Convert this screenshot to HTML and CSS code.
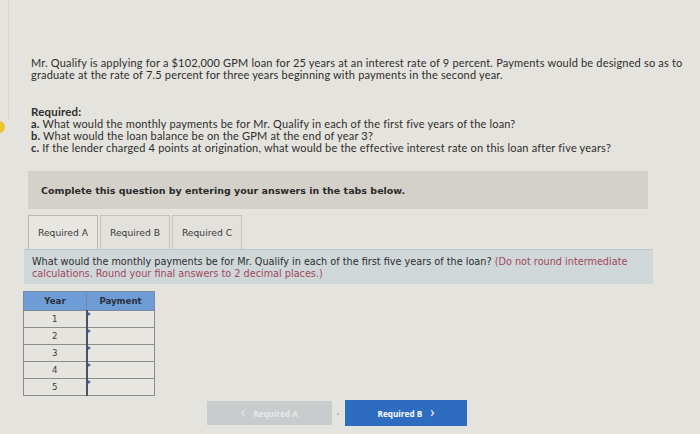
FILE: index.html
```html
<!DOCTYPE html>
<html>
<head>
<meta charset="utf-8">
<link rel="stylesheet" href="styles.css">
</head>
<body>
<div class="edge-line"></div>
<div class="edge-dot"></div>
<div class="page">
  <p class="intro">Mr. Qualify is applying for a $102,000 GPM loan for 25 years at an interest rate of 9 percent. Payments would be designed so as to graduate at the rate of 7.5 percent for three years beginning with payments in the second year.</p>
  <div class="required">
    <div class="req-title">Required:</div>
    <div><b>a.</b> What would the monthly payments be for Mr. Qualify in each of the first five years of the loan?</div>
    <div><b>b.</b> What would the loan balance be on the GPM at the end of year 3?</div>
    <div><b>c.</b> If the lender charged 4 points at origination, what would be the effective interest rate on this loan after five years?</div>
  </div>
  <div class="instructions">Complete this question by entering your answers in the tabs below.</div>
  <div class="tabs">
    <div class="tab active">Required A</div>
    <div class="tab">Required B</div>
    <div class="tab">Required C</div>
  </div>
  <div class="panel">
    <div class="pline">What would the monthly payments be for Mr. Qualify in each of the first five years of the loan? <span class="note">(Do not round intermediate</span></div>
    <div class="pline note">calculations. Round your final answers to 2 decimal places.)</div>
  </div>
  <table class="grid">
    <thead>
      <tr><th class="c-year">Year</th><th class="c-pay">Payment</th></tr>
    </thead>
    <tbody>
      <tr><td class="year">1</td><td class="input"><span class="flag"></span></td></tr>
      <tr><td class="year">2</td><td class="input"><span class="flag"></span></td></tr>
      <tr><td class="year">3</td><td class="input"><span class="flag"></span></td></tr>
      <tr><td class="year">4</td><td class="input"><span class="flag"></span></td></tr>
      <tr><td class="year">5</td><td class="input"><span class="flag"></span></td></tr>
    </tbody>
  </table>
  <div class="nav">
    <div class="btn prev"><span class="chev">&lsaquo;</span> Required A</div>
    <div class="sep"></div>
    <div class="btn next">Required B <span class="chev">&rsaquo;</span></div>
  </div>
</div>
</body>
</html>
```
FILE: styles.css
```css
html, body {
  margin: 0;
  padding: 0;
}
body {
  background: #e5e3dd;
  font-family: Lato, "Open Sans", sans-serif;
  color: #2e2e2e;
  width: 700px;
  height: 434px;
  overflow: hidden;
  position: relative;
}
.edge-line {
  position: absolute;
  left: 8px;
  top: 0;
  width: 1px;
  height: 120px;
  background: #d8d6d0;
}
.edge-dot {
  position: absolute;
  left: -6px;
  top: 121px;
  width: 11px;
  height: 12px;
  border-radius: 50%;
  background: #e8c531;
}
.page {
  padding: 57px 0 0 28px;
}
.intro {
  margin: 0;
  padding-left: 3px;
  width: 665px;
  font-size: 11px;
  letter-spacing: 0.18px;
  line-height: 12px;
}
.required {
  margin-top: 25px;
  padding-left: 3px;
  font-size: 11px;
  letter-spacing: 0.18px;
  line-height: 12px;
}
.req-title {
  font-weight: 700;
  font-size: 11.5px;
}
.required b {
  font-weight: 700;
}
.instructions {
  margin-top: 17px;
  width: 620px;
  height: 38px;
  box-sizing: border-box;
  padding-left: 13px;
  display: flex;
  align-items: center;
  background: #d3d1ca;
  font-family: "DejaVu Sans", Verdana, sans-serif;
  font-weight: 700;
  font-size: 9.5px;
  color: #2a2a2a;
}
.tabs {
  margin-top: 6px;
  display: flex;
  gap: 2px;
  height: 34px;
}
.tab {
  width: 70px;
  box-sizing: border-box;
  border: 1px solid #c4c2bc;
  border-bottom: none;
  background: #e3e1db;
  display: flex;
  align-items: center;
  justify-content: center;
  font-family: "DejaVu Sans", Verdana, sans-serif;
  font-size: 9.2px;
  color: #3a3a3a;
  white-space: nowrap;
}
.tab.active {
  background: #e8e6e0;
  border-color: #b8b6b0;
}
.panel {
  margin-left: -4px;
  width: 629px;
  height: 35px;
  box-sizing: border-box;
  padding: 6px 0 0 8px;
  background: #cfd7d9;
  border-top: 1px solid #bfc7c9;
  font-family: "DejaVu Sans", Verdana, sans-serif;
  font-size: 9.7px;
  line-height: 12px;
  color: #2e2e2e;
}
.pline {
  white-space: nowrap;
}
.note {
  color: #a3475b;
}
.grid {
  margin: 7px 0 0 -5px;
  border-collapse: collapse;
  font-family: "DejaVu Sans", Verdana, sans-serif;
  font-size: 8.6px;
}
.grid th {
  height: 18px;
  padding: 0;
  background: #6e9cd6;
  border: 1px solid #7a8a9c;
  color: #2a2f3a;
  font-weight: 700;
}
.c-year { width: 62px; }
.c-pay { width: 67px; }
.grid td {
  height: 16px;
  padding: 0;
  border: 1px solid #8c8c8c;
  background: #e6e4de;
}
.grid td.year {
  text-align: center;
  color: #3a3a3a;
}
.grid td.input {
  position: relative;
  border-left: 2px solid #4a5366;
  background: #e8e6e1;
}
.flag {
  position: absolute;
  left: 0;
  top: 1px;
  width: 0;
  height: 0;
  border-top: 2px solid transparent;
  border-bottom: 2px solid transparent;
  border-left: 3px solid #4a6aa8;
}
.nav {
  margin: 4px 0 0 179px;
  display: flex;
  align-items: center;
}
.btn {
  box-sizing: border-box;
  display: flex;
  align-items: center;
  justify-content: center;
  gap: 8px;
  font-family: "Open Sans", Lato, sans-serif;
  font-weight: 700;
  font-size: 8.2px;
  color: #fff;
}
.btn .chev {
  font-size: 14px;
  font-weight: 400;
  line-height: 1;
  margin-top: -2px;
}
.prev {
  width: 125px;
  height: 24px;
  background: #c9cccd;
  color: #e6e8e9;
}
.sep {
  width: 2px;
  height: 2px;
  margin: 2px 6px 0 5px;
  background: #b8b6ae;
}
.next {
  width: 122px;
  height: 26px;
  background: #2e6cc0;
}
```
